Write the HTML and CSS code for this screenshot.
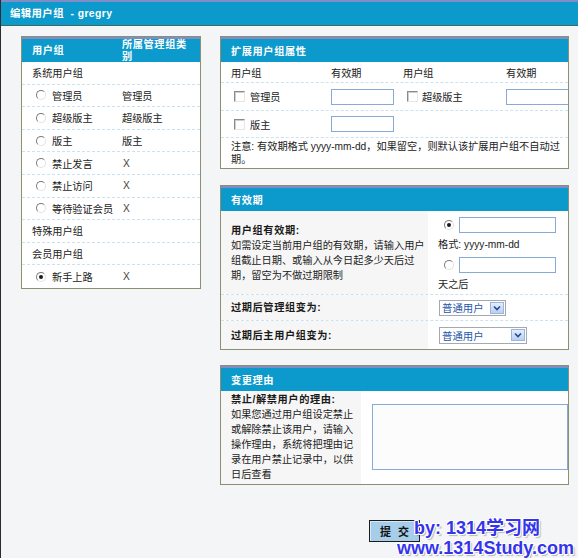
FILE: index.html
```html
<!DOCTYPE html>
<html lang="zh-CN">
<head>
<meta charset="utf-8">
<title>编辑用户组</title>
<link rel="stylesheet" href="styles.css">
</head>
<body>
<div class="topbar">编辑用户组 &nbsp;- gregry</div>
<div class="main">
  <div class="panel groups">
    <div class="phead ghead">
      <div class="gc1">用户组</div>
      <div class="gc2">所属管理组类别</div>
    </div>
    <div class="grow"><div class="gc1">系统用户组</div><div></div></div>
    <div class="grow"><div class="gc1 opt"><span class="radio"></span>管理员</div><div>管理员</div></div>
    <div class="grow"><div class="gc1 opt"><span class="radio"></span>超级版主</div><div>超级版主</div></div>
    <div class="grow"><div class="gc1 opt"><span class="radio"></span>版主</div><div>版主</div></div>
    <div class="grow"><div class="gc1 opt"><span class="radio"></span>禁止发言</div><div class="x">X</div></div>
    <div class="grow"><div class="gc1 opt"><span class="radio"></span>禁止访问</div><div class="x">X</div></div>
    <div class="grow"><div class="gc1 opt"><span class="radio"></span>等待验证会员</div><div class="x">X</div></div>
    <div class="grow"><div class="gc1">特殊用户组</div><div></div></div>
    <div class="grow"><div class="gc1">会员用户组</div><div></div></div>
    <div class="grow"><div class="gc1 opt"><span class="radio on"></span>新手上路</div><div class="x">X</div></div>
  </div>

  <div class="rcol">
    <div class="panel ext">
      <div class="phead">扩展用户组属性</div>
      <div class="erow ehead"><div>用户组</div><div>有效期</div><div>用户组</div><div>有效期</div></div>
      <div class="erow er1">
        <div class="cb"><span class="chk"></span>管理员</div>
        <div><input class="txt" type="text"></div>
        <div class="cb cb2"><span class="chk"></span>超级版主</div>
        <div><input class="txt" type="text"></div>
      </div>
      <div class="erow er2">
        <div class="cb"><span class="chk"></span>版主</div>
        <div><input class="txt" type="text"></div>
        <div></div>
        <div></div>
      </div>
      <div class="note">注意: 有效期格式 yyyy-mm-dd，如果留空，则默认该扩展用户组不自动过期。</div>
    </div>

    <div class="panel valid">
      <div class="phead">有效期</div>
      <div class="vrow v1">
        <div class="lab"><div><b>用户组有效期:</b>如需设定当前用户组的有效期，请输入用户组截止日期、或输入从今日起多少天后过期，留空为不做过期限制</div></div>
        <div class="val">
          <div class="rl"><span class="radio on"></span><input class="txt wide" type="text"></div>
          <div class="fmt">格式: yyyy-mm-dd</div>
          <div class="rl"><span class="radio"></span><input class="txt wide" type="text"></div>
          <div class="fmt">天之后</div>
        </div>
      </div>
      <div class="vrow v2">
        <div class="lab"><b>过期后管理组变为:</b></div>
        <div class="val sval">
          <div class="select s1"><span>普通用户</span><span class="sarrow"><svg width="8" height="6" viewBox="0 0 8 6"><polyline points="1,1.5 4,4.5 7,1.5" fill="none" stroke="#24479a" stroke-width="1.6"/></svg></span></div>
        </div>
      </div>
      <div class="vrow v3">
        <div class="lab"><b>过期后主用户组变为:</b></div>
        <div class="val sval">
          <div class="select s2"><span>普通用户</span><span class="sarrow"><svg width="8" height="6" viewBox="0 0 8 6"><polyline points="1,1.5 4,4.5 7,1.5" fill="none" stroke="#24479a" stroke-width="1.6"/></svg></span></div>
        </div>
      </div>
    </div>

    <div class="panel reason">
      <div class="phead">变更理由</div>
      <div class="rrow">
        <div class="rlab"><b>禁止/解禁用户的理由:</b>如果您通过用户组设定禁止或解除禁止该用户，请输入操作理由，系统将把理由记录在用户禁止记录中，以供日后查看</div>
        <div class="rval"><textarea class="area"></textarea></div>
      </div>
    </div>

    <div class="actions"><button class="submit" type="button">提 交</button></div>
  </div>
</div>

<div class="wm">
  <div class="wm1">by: 1314学习网</div>
  <div class="wm2">www.1314Study.com</div>
</div>
</body>
</html>
```

FILE: styles.css
```css
* { box-sizing: border-box; }

html, body { margin: 0; padding: 0; }

body {
  width: 578px;
  height: 558px;
  overflow: hidden;
  position: relative;
  background: #f4f5f6;
  border-left: 1px solid #2c2c2c;
  font-family: "Liberation Sans", "Noto Sans CJK SC", sans-serif;
  font-size: 10.2px;
  color: #222;
}

b { font-weight: bold; letter-spacing: 0.6px; color: #1a1a1a; }

.topbar {
  height: 26px;
  background: #0b9acb;
  border-top: 2px solid #7f8cc6;
  border-bottom: 1px solid #3c6a5c;
  color: #fff;
  font-weight: bold;
  font-size: 10.4px;
  letter-spacing: 0.4px;
  line-height: 23px;
  padding-left: 9px;
}

.main {
  display: flex;
  align-items: flex-start;
  padding: 10px 0 0 20px;
}

.panel {
  border: 1px solid #8e8e72;
  background: #fff;
  overflow: hidden;
}

.phead {
  height: 25px;
  border-top: 2px solid #7f8cc6;
  background: #0b9acb;
  color: #fff;
  font-weight: bold;
  letter-spacing: 0.6px;
  display: flex;
  align-items: center;
  padding: 0 0 1px 10px;
}

/* left groups panel */
.groups { width: 180px; }

.ghead {
  display: grid;
  grid-template-columns: 100px 1fr;
  padding: 0 0 2px 0;
  line-height: 12px;
}
.ghead .gc1 { padding-left: 10px; }
.ghead .gc2 { padding-right: 8px; }

.grow {
  display: grid;
  grid-template-columns: 100px 1fr;
  align-items: center;
  height: 22.6px;
  border-bottom: 1px dashed #c9e3f3;
}
.grow:last-child { border-bottom: none; }
.grow .gc1 { padding-left: 10px; }
.grow .opt { display: flex; align-items: center; padding-left: 14px; }
.grow .opt .radio { margin-right: 6px; }
.x { color: #444; padding-left: 1px; }

.radio {
  display: inline-block;
  flex: none;
  position: relative;
  width: 10px;
  height: 10px;
  border-radius: 50%;
  border: 1px solid;
  border-color: #7a7a7a #e2e2e2 #e2e2e2 #7a7a7a;
  background: #fff;
}
.radio.on::after {
  content: "";
  position: absolute;
  left: 2px;
  top: 2px;
  width: 4px;
  height: 4px;
  border-radius: 50%;
  background: #1a1a1a;
}

.chk {
  display: inline-block;
  flex: none;
  width: 11px;
  height: 11px;
  border: 1px solid;
  border-color: #8a8a8a #e6e6e6 #e6e6e6 #8a8a8a;
  box-shadow: inset 1px 1px 0 #cfcfcf;
  background: #fff;
}

/* right column */
.rcol { width: 349px; margin-left: 19px; }

.erow {
  display: grid;
  grid-template-columns: 110px 72px 103px 1fr;
  align-items: center;
  border-bottom: 1px dashed #c9e3f3;
}
.erow > :first-child { padding-left: 10px; }
.ehead { height: 21px; }
.er1 { height: 28px; }
.er2 { height: 27px; }

.cb { display: flex; align-items: center; }
.cb .chk { margin: 0 5px 0 3px; }
.cb2 .chk { margin: 0 4px 0 4px; }

.txt {
  display: block;
  width: 63px;
  height: 16px;
  padding: 0;
  margin: 0;
  border: 1px solid #88aad8;
  background: #fff;
}
.txt.wide { width: 97px; }

.note {
  padding: 2px 2px 2px 10px;
  line-height: 13px;
}

.valid { margin-top: 16px; }

.vrow {
  display: grid;
  grid-template-columns: 207px 1fr;
  border-bottom: 1px dashed #c9e3f3;
}
.vrow.v3 { border-bottom: none; }
.lab {
  background: #f6f6f6;
  padding-left: 10px;
  display: flex;
  align-items: center;
  line-height: 15px;
}
.lab b { display: block; }
.v2 { height: 26px; }
.v3 { height: 28px; }

.val { padding: 6px 0 2px 10px; }
.rl { display: flex; align-items: center; height: 16px; }
.rl .radio { margin: 0 5px 0 6px; }
.fmt { line-height: 15px; margin: 4px 0 5px; }
.fmt:last-child { margin-bottom: 0; }

.sval { padding: 0 0 0 11px; display: flex; align-items: center; }

.select {
  display: flex;
  align-items: center;
  justify-content: space-between;
  height: 16px;
  border: 1px solid #a3a9b1;
  background: #fff;
  padding: 0 1px 0 2px;
  color: #1f57a8;
  font-size: 10.4px;
}
.select.s1 { width: 67px; }
.select.s2 { width: 88px; height: 17px; }
.sarrow {
  display: flex;
  align-items: center;
  justify-content: center;
  width: 14px;
  height: 12px;
  border: 1px solid #9ab4dc;
  background: linear-gradient(#e4eefb, #b9d0f0);
}

.reason { margin-top: 15px; }

.rrow {
  display: grid;
  grid-template-columns: 140px 1fr;
  height: 93px;
}
.rlab {
  background: #f6f6f6;
  padding: 1px 5px 0 10px;
  line-height: 15px;
}
.rlab b { display: block; }
.rval { padding: 13px 0 0 11px; }
.area {
  display: block;
  width: 196px;
  height: 66px;
  margin: 0;
  padding: 0;
  border: 1px solid #88aad8;
  background: #fcfcfd;
  resize: none;
}

.actions {
  display: flex;
  justify-content: center;
  margin-top: 35px;
}
.submit {
  width: 51px;
  height: 22px;
  padding: 0;
  border: 1px solid #1c1c1c;
  background: #a6cdea;
  box-shadow: inset 1px 1px 0 #d4e8f6;
  font-family: "Liberation Sans", "Noto Sans CJK SC", sans-serif;
  font-size: 11px;
  font-weight: bold;
  color: #111;
  letter-spacing: 2px;
  text-indent: 2px;
}

/* watermark overlay */
.wm {
  position: absolute;
  left: 396px;
  top: 518px;
  font-family: "Liberation Sans", "Noto Sans CJK SC", sans-serif;
  font-size: 18px;
  font-weight: bold;
  line-height: 20px;
  color: #3434ec;
  white-space: nowrap;
  text-shadow: -1px -1px 0 #fff, 1px -1px 0 #fff, -1px 1px 0 #fff, 1px 1px 0 #fff, 2px 2px 1px rgba(0,0,0,0.25);
}
.wm1 { margin-left: 17px; }
```
